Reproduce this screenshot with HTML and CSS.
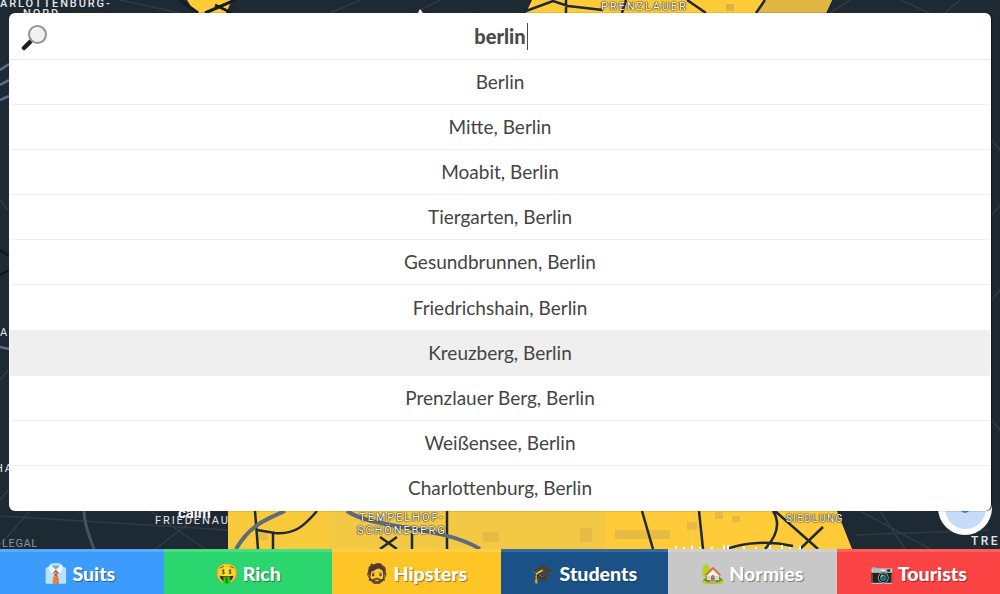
FILE: index.html
```html
<!DOCTYPE html>
<html lang="en">
<head>
<meta charset="utf-8">
<title>Berlin</title>
<link rel="stylesheet" href="styles.css">
</head>
<body>
<div class="app">
  <main class="map">
    <svg class="map-art" viewBox="0 0 1000 549" aria-hidden="true">
      <rect width="1000" height="549" fill="#1e2a33"/>
      <g fill="none" stroke="#2f3b44" stroke-width="1.5">
        <path d="M120 0L180 13M360 0L330 13M440 0L415 13M720 0L745 13M850 0L830 13M900 0L930 13M960 0L945 13"/>
        <path d="M0 516L228 530M0 545L30 511M150 511L205 549M205 511L155 549M860 511L930 549M880 511L905 549M855 535L990 530"/>
        <path d="M992 140L1000 150M992 300L1000 290M992 420L1000 430M992 215L1000 205M0 200L8 210M0 380L8 370M0 500L8 490"/>
      </g>
      <path d="M0 70L9 64M0 85L9 80M0 100L9 96M0 347L9 349" fill="none" stroke="#5d6f8e" stroke-width="2.5"/>
      <path d="M84 511C84 525 90 538 94 549" fill="none" stroke="#47525e" stroke-width="3"/>
      <path d="M0 250L9 256M0 275L9 270" fill="none" stroke="#0d1318" stroke-width="2"/>
      <path d="M418 13L420 9L423 13Z" fill="#fff"/>
      <path d="M526 13L532 0H832L826 13Z" fill="#ffcb39"/>
      <path d="M763 0H832L826 13H756Z" fill="#dfb544"/>
      <rect x="726" y="4" width="8" height="7" fill="#e2b23d"/>
      <path d="M187 0H232L226 13H195Z" fill="#ffcb39"/>
      <path d="M180 0L198 13M205 13L235 0M215 5L232 13" fill="none" stroke="#141b21" stroke-width="3"/>
      <path d="M526 11L553 1L568 6L603 10M566 0V13M626 0L622 13M687 0L706 13M765 0L756 13" fill="none" stroke="#1e2a33" stroke-width="2.5"/>
      <path d="M228 511H330V549H228Z" fill="#f9ca3c"/>
      <path d="M330 511H605V549H330Z" fill="#f3c844"/>
      <path d="M605 511H837L852 549H605Z" fill="#ffcb39"/>
      <g fill="#e6bb45">
        <rect x="580" y="528" width="12" height="14"/>
        <rect x="615" y="530" width="55" height="9"/>
        <rect x="483" y="532" width="16" height="10"/>
        <rect x="687" y="522" width="10" height="8"/>
        <rect x="715" y="512" width="8" height="7"/>
        <rect x="732" y="516" width="8" height="6"/>
        <rect x="258" y="532" width="10" height="8"/>
      </g>
      <g fill="none" stroke="#1e2a33" stroke-width="2.5">
        <path d="M255 511L258 549M273 532V549M317 511C305 525 295 535 275 533L257 530"/>
        <path d="M642 511L653 549M699 511L703 549M773 511C780 522 778 535 765 549M727 549C745 542 770 541 793 546M823 527L800 549M775 511L818 549"/>
        <path d="M380 537L397 549M380 549L397 537M412 533V549M447 511V549"/>
      </g>
      <g fill="none" stroke="#5e6b7a" stroke-width="4">
        <path d="M236 549C250 525 265 520 285 511"/>
        <path d="M347 511C375 530 440 525 480 549"/>
      </g>
      <path d="M676 549V546M684 549V547M692 549V545M700 549V547M712 549V546M724 549V545M728 549V545M744 549V546M756 549V547M770 549V545M782 549V545M790 549V547M800 549V546" stroke="#fff" stroke-width="2"/>
    </svg>
    <span class="label label-dark label-charl">ARLOTTENBURG-</span>
    <span class="label label-dark label-nord">NORD</span>
    <span class="label label-light label-prenz">PRENZLAUER</span>
    <span class="label label-dark label-a">A</span>
    <span class="label label-dark label-ha">HA</span>
    <span class="label label-place">calm</span>
    <span class="label label-light label-temp">TEMPELHOF-<br>SCHÖNEBERG</span>
    <span class="label label-light label-sied">SIEDLUNG</span>
    <span class="label label-dark label-fried">FRIEDENAU</span>
    <span class="label label-dark label-legal">LEGAL</span>
    <span class="label label-dark label-trep">TREP</span>
    <div class="locate"><span class="locate-disc"><span class="locate-dot"></span></span></div>
    <section class="search">
      <div class="search-row">
        <svg class="lens" viewBox="0 0 26 26" aria-hidden="true">
          <path d="M9 17L3 23" stroke="#1b1f24" stroke-width="4.5" stroke-linecap="round"/>
          <circle cx="16.5" cy="9.5" r="8.5" fill="#eef0f1" stroke="#8f9499" stroke-width="2"/>
          <path d="M10.5 7A7 7 0 0 1 17 3" fill="none" stroke="#fff" stroke-width="1.5"/>
        </svg>
        <span class="query">berlin<span class="caret"></span></span>
      </div>
      <ul class="results">
        <li>Berlin</li>
        <li>Mitte, Berlin</li>
        <li>Moabit, Berlin</li>
        <li>Tiergarten, Berlin</li>
        <li>Gesundbrunnen, Berlin</li>
        <li>Friedrichshain, Berlin</li>
        <li class="active">Kreuzberg, Berlin</li>
        <li>Prenzlauer Berg, Berlin</li>
        <li>Weißensee, Berlin</li>
        <li>Charlottenburg, Berlin</li>
      </ul>
    </section>
  </main>
  <nav class="tabs">
    <a class="tab tab-suits"><span class="emoji">👔</span>Suits</a>
    <a class="tab tab-rich"><span class="emoji">🤑</span>Rich</a>
    <a class="tab tab-hipsters"><span class="emoji">🧔</span>Hipsters</a>
    <a class="tab tab-students"><span class="emoji">🎓</span>Students</a>
    <a class="tab tab-normies"><span class="emoji">🏡</span>Normies</a>
    <a class="tab tab-tourists"><span class="emoji">📷</span>Tourists</a>
  </nav>
</div>
</body>
</html>
```
FILE: styles.css
```css
* { box-sizing: border-box; }
html, body { margin: 0; height: 100%; overflow: hidden; }
body { font-family: "Lato", "Noto Sans", sans-serif; color: #444; }
.app { display: flex; flex-direction: column; height: 594px; }
.map { position: relative; flex: 1; overflow: hidden; background: #1e2a33; }
.map-art { position: absolute; inset: 0; width: 100%; height: 100%; display: block; }
.label { position: absolute; font-family: "Roboto", sans-serif; font-size: 11px; letter-spacing: 1.9px; line-height: 13px; white-space: nowrap; text-align: center; }
.label-dark { color: #e4e6e8; }
.label-light { color: #fff; text-shadow: 0 0 2px #222, 0 0 1px #222, 0 0 1px #222; }
.label-charl { left: 0; top: -3px; font-weight: 500; }
.label-nord { left: 23px; top: 7px; font-weight: 500; }
.label-prenz { left: 601px; top: 0; }
.label-a { left: 0; top: 326px; }
.label-ha { left: -5px; top: 462px; }
.label-place { left: 178px; top: 504px; color: #fff; font-size: 15px; font-weight: 700; letter-spacing: 0; line-height: 18px; }
.label-temp { left: 357px; top: 511px; }
.label-sied { left: 786px; top: 512px; font-size: 10px; letter-spacing: 1.4px; }
.label-fried { left: 155px; top: 514px; }
.label-legal { left: 2px; top: 538px; font-size: 11px; color: #8a939b; letter-spacing: .6px; line-height: 11px; }
.label-trep { left: 971px; top: 535px; font-size: 12px; letter-spacing: 2.4px; font-weight: 500; }
.locate { position: absolute; left: 938px; top: 481px; width: 54px; height: 54px; border-radius: 50%; background: #fff; display: flex; align-items: center; justify-content: center; }
.locate-disc { width: 41px; height: 41px; border-radius: 50%; background: #c9dcf7; display: flex; align-items: center; justify-content: center; }
.locate-dot { width: 10px; height: 10px; border-radius: 50%; background: #3f7fd4; }
.search { position: absolute; left: 9px; top: 13px; width: 982px; background: #fff; border-radius: 6px; overflow: hidden; box-shadow: 1px 0 1px #10171c; }
.search-row { position: relative; height: 47px; display: flex; align-items: center; justify-content: center; border-bottom: 1px solid #eaeaea; }
.lens { position: absolute; left: 12px; top: 12px; width: 26px; height: 26px; }
.query { font-size: 20px; font-weight: 900; color: #4a4a4a; line-height: 27px; position: relative; }
.caret { position: absolute; right: -2px; top: 0; width: 1px; height: 27px; background: #4a4a4a; }
.results { list-style: none; margin: 0; padding: 0 1px; }
.results li { height: 45.1px; padding-bottom: 1px; display: flex; align-items: center; justify-content: center; font-size: 19px; border-bottom: 1px solid #eeeeee; }
.results li:last-child { border-bottom: 0; }
.results .active { background: #efefef; }
.tabs { display: grid; grid-template-columns: 164px 168px 169px 167px 169px 163px; height: 45px; }
.tab { display: flex; align-items: center; justify-content: center; gap: 4px; font-size: 19.6px; font-weight: 900; color: #fff; text-shadow: 1px 1px 1px rgba(0,0,0,.4); border-top: 3px solid rgba(255,255,255,.15); }
.emoji { font-family: "Noto Color Emoji", "DejaVu Sans", sans-serif; font-size: 19px; font-weight: 400; text-shadow: none; }
.tab-suits { background: #3c9cfd; padding-right: 4px; }
.tab-rich { background: #2bd66f; }
.tab-hipsters { background: #fec527; }
.tab-students { background: #1a5186; text-shadow: 1px 1px 1px rgba(0,0,0,.2); }
.tab-normies { background: #c8c8c8; }
.tab-tourists { background: #fc4444; }
```
